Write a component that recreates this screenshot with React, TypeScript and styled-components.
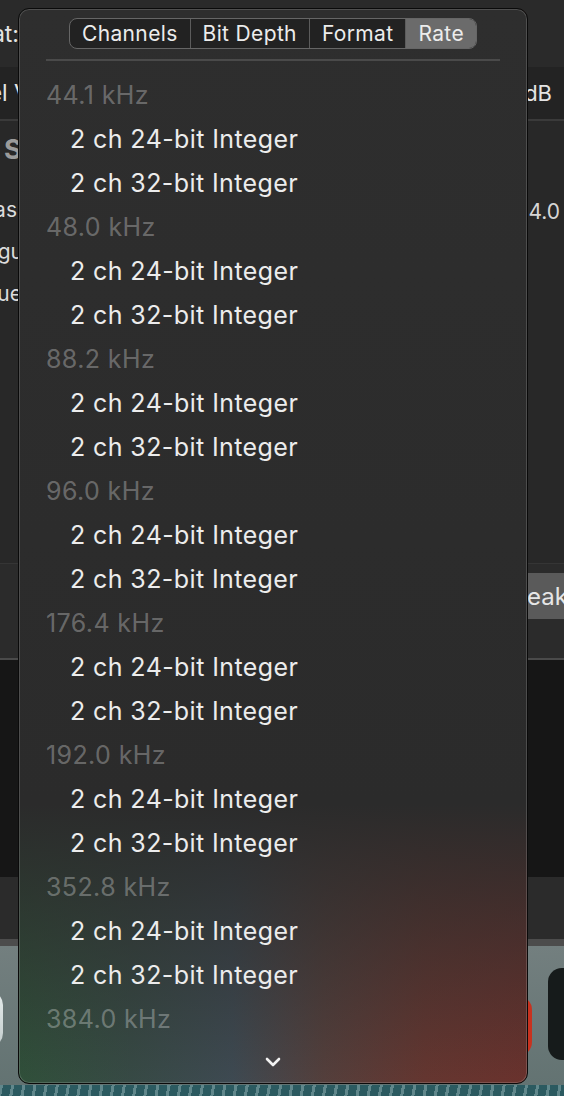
import { createGlobalStyle, styled } from "styled-components"

const GlobalStyle = createGlobalStyle`
  html, body {
    margin: 0;
    padding: 0;
    background: #1c1c1c;
  }
  body {
    font-family: Inter, "Noto Sans", "Liberation Sans", sans-serif;
    -webkit-font-smoothing: antialiased;
  }
`

const tabs = ["Channels", "Bit Depth", "Format", "Rate"]
const selectedTab = "Rate"

const rates = [
  "44.1 kHz",
  "48.0 kHz",
  "88.2 kHz",
  "96.0 kHz",
  "176.4 kHz",
  "192.0 kHz",
  "352.8 kHz",
  "384.0 kHz",
]
const formats = ["2 ch 24-bit Integer", "2 ch 32-bit Integer"]

export default function App() {
  return (
    <>
      <GlobalStyle />
      <Screen>
        <Band $bg="#2a2a2a" $h={67}>
          <EdgeCell $end={19}>
            <EdgeText>Format:</EdgeText>
          </EdgeCell>
        </Band>
        <Band $bg="#232323" $h={52} $line="#3a3a3a">
          <EdgeCell $end={30}>
            <EdgeText>Level V</EdgeText>
          </EdgeCell>
          <RightLabel>dB</RightLabel>
        </Band>
        <Body>
          <Side>
            <SideHeading>S</SideHeading>
            <SideList>
              <EdgeCell $end={17}>
                <SideItem>Bias</SideItem>
              </EdgeCell>
              <EdgeCell $end={23}>
                <SideItem>Regu</SideItem>
              </EdgeCell>
              <EdgeCell $end={22}>
                <SideItem>Cue</SideItem>
              </EdgeCell>
            </SideList>
          </Side>
          <Side $right>
            <SideValue>4.0</SideValue>
          </Side>
        </Body>
        <Band $bg="#2b2b2b" $h={94} $topLine="#353535" $line="#4a4a4a">
          <span />
          <PeakButton>Peak</PeakButton>
        </Band>
        <Band $bg="#161616" $h={217} />
        <Band $bg="#2b2b2b" $h={62} $line="#4c4c4c" $lineW={7} />
        <Dock>
          <DockTile $tone="light" />
          <DockRight>
            <DockTile $tone="red" />
            <DockTile $tone="dark" />
          </DockRight>
        </Dock>
        <Water />
      </Screen>

      <Menu>
        <Segmented>
          {tabs.map((t) => (
            <Segment key={t} $active={t === selectedTab}>
              {t}
            </Segment>
          ))}
        </Segmented>
        <Separator />
        <List>
          {rates.map((rate) => (
            <Group key={rate}>
              <Header>{rate}</Header>
              {formats.map((f) => (
                <Item key={f}>{f}</Item>
              ))}
            </Group>
          ))}
        </List>
        <ScrollHint>
          <svg width="16" height="10" viewBox="0 0 16 10">
            <path
              d="M2 2 L8 8 L14 2"
              fill="none"
              stroke="#f2f2f2"
              strokeWidth="2.6"
              strokeLinecap="round"
              strokeLinejoin="round"
            />
          </svg>
        </ScrollHint>
      </Menu>
    </>
  )
}

const Screen = styled.div`
  width: 564px;
  height: 1096px;
  display: flex;
  flex-direction: column;
  overflow: hidden;
  color: #e2e2e2;
  font-size: 22px;
`

const Band = styled.div<{
  $bg: string
  $h: number
  $line?: string
  $lineW?: number
  $topLine?: string
}>`
  flex: none;
  height: ${({ $h }) => $h}px;
  background: ${({ $bg }) => $bg};
  border-bottom: ${({ $line, $lineW }) =>
    $line ? `${$lineW ?? 2}px solid ${$line}` : "none"};
  border-top: ${({ $topLine }) => ($topLine ? `1px solid ${$topLine}` : "none")};
  display: flex;
  align-items: center;
  justify-content: space-between;
  overflow: hidden;
`

/* a cell that ends at a given x, its text running off the left edge */
const EdgeCell = styled.div<{ $end: number }>`
  width: ${({ $end }) => $end}px;
  display: flex;
  justify-content: flex-end;
`

const EdgeText = styled.span`
  white-space: nowrap;
  color: #e4e4e4;
  font-size: 23px;
`

const RightLabel = styled.span`
  margin-right: 12px;
  color: #e4e4e4;
  font-size: 22px;
`

const Body = styled.div`
  flex: none;
  height: 442px;
  background: #282828;
  display: flex;
  justify-content: space-between;
  overflow: hidden;
`

const Side = styled.div<{ $right?: boolean }>`
  display: flex;
  flex-direction: column;
  align-items: ${({ $right }) => ($right ? "flex-end" : "flex-start")};
  padding-top: ${({ $right }) => ($right ? 78 : 12)}px;
`

const SideHeading = styled.span`
  margin-left: 4px;
  font-size: 27px;
  font-weight: 700;
  color: #9b9b9b;
`

const SideList = styled.div`
  display: flex;
  flex-direction: column;
  gap: 16px;
  margin-top: 31px;
`

const SideItem = styled.span`
  white-space: nowrap;
  font-size: 21px;
  line-height: 26px;
  color: #dcdcdc;
`

const SideValue = styled.span`
  margin-right: 4px;
  font-size: 21px;
  color: #d6d6d6;
`

const PeakButton = styled.div`
  align-self: flex-start;
  margin-top: 9px;
  margin-right: -4px;
  height: 46px;
  padding: 0 0 0 10px;
  border-radius: 6px 0 0 6px;
  background: #5a5a5a;
  color: #e6e6e6;
  display: flex;
  align-items: center;
  font-size: 24px;
`

const Dock = styled.div`
  flex: none;
  height: 139px;
  background: linear-gradient(to bottom, #737f7f, #637372);
  display: flex;
  align-items: center;
  justify-content: space-between;
  overflow: hidden;
`

const DockRight = styled.div`
  display: flex;
  align-items: center;
  gap: 16px;
  margin-right: -40px;
`

const DockTile = styled.div<{ $tone: "light" | "dark" | "red" }>`
  border-radius: 14px;
  ${({ $tone }) =>
    $tone === "light"
      ? `width: 40px; height: 56px; margin-left: -37px; margin-top: 6px; background: linear-gradient(#e6ecec, #c3cccc);`
      : $tone === "red"
        ? `width: 40px; height: 60px; background: #c8321f; margin-top: 20px;`
        : `width: 56px; height: 92px; background: #161b1b; margin-top: -4px;`}
`

const Water = styled.div`
  flex: none;
  height: 11px;
  background:
    repeating-linear-gradient(100deg, rgba(220, 240, 240, 0.3) 0 3px, transparent 3px 11px),
    #2b5a60;
`

const Menu = styled.div`
  position: absolute;
  left: 18px;
  top: 8px;
  width: 510px;
  height: 1076px;
  box-sizing: border-box;
  border: 1px solid #0a0a0a;
  border-radius: 11px;
  box-shadow: inset 0 0 0 1px rgba(255, 255, 255, 0.16);
  overflow: hidden;
  display: flex;
  flex-direction: column;
  background:
    linear-gradient(
      to bottom,
      #2e2e2e 0%,
      #2b2b2b 74%,
      rgba(43, 43, 43, 0.5) 87%,
      rgba(43, 43, 43, 0) 100%
    ),
    linear-gradient(
      to right,
      #30503a 0%,
      #374a45 22%,
      #3e4a52 42%,
      #543f3c 60%,
      #653630 80%,
      #6a322d 100%
    );
`

const Segmented = styled.div`
  align-self: center;
  margin-top: 9px;
  display: flex;
  height: 31px;
  box-sizing: border-box;
  border: 1.5px solid #666;
  border-radius: 8px;
  background: #222;
  overflow: hidden;
`

const Segment = styled.div<{ $active: boolean }>`
  display: flex;
  align-items: center;
  padding: 0 12px;
  font-size: 21px;
  letter-spacing: 0.35px;
  color: #ececec;
  background: ${({ $active }) => ($active ? "#6b6b6b" : "transparent")};
  border-left: 1.5px solid #5c5c5c;

  &:first-child {
    border-left: none;
  }
`

const Separator = styled.div`
  flex: none;
  height: 2px;
  margin: 10px 27px 0;
  background: #4a4a4a;
`

const List = styled.div`
  flex: 1;
  overflow: hidden;
  margin-top: 12px;
  display: flex;
  flex-direction: column;
`

const Group = styled.div`
  display: flex;
  flex-direction: column;
`

const Row = styled.div`
  height: 44px;
  display: flex;
  align-items: center;
  font-size: 25px;
  letter-spacing: 0.4px;
  white-space: nowrap;
`

const Header = styled(Row)`
  padding-left: 27px;
  color: rgba(255, 255, 255, 0.3);
`

const Item = styled(Row)`
  padding-left: 51px;
  color: #ececec;
`

const ScrollHint = styled.div`
  flex: none;
  height: 42px;
  display: flex;
  align-items: center;
  justify-content: center;
`
